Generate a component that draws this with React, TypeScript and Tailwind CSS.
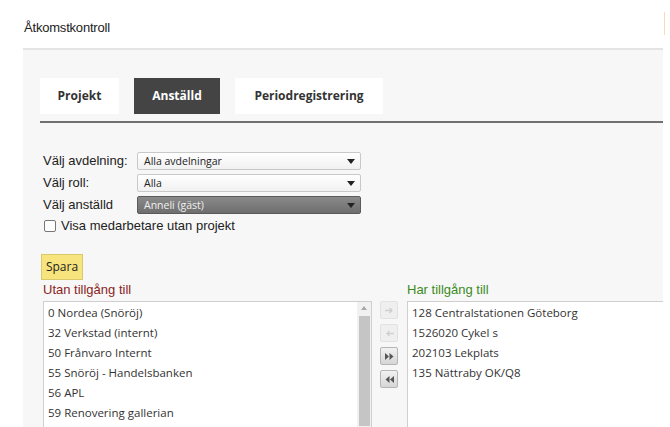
import { useState } from "react";

const withoutAccess = [
  "0 Nordea (Snöröj)",
  "32 Verkstad (internt)",
  "50 Frånvaro Internt",
  "55 Snöröj - Handelsbanken",
  "56 APL",
  "59 Renovering gallerian",
  "61 Servicearbeten",
];

const withAccess = [
  "128 Centralstationen Göteborg",
  "1526020 Cykel s",
  "202103 Lekplats",
  "135 Nättraby OK/Q8",
];

const tabs = [
  { name: "Projekt", width: "w-[79px]" },
  { name: "Anställd", width: "w-[86px]" },
  { name: "Periodregistrering", width: "w-[148px]" },
];

const Caret = () => (
  <svg width="8" height="5" viewBox="0 0 8 5" className="mr-[5px]">
    <path d="M0 0h8L4 5z" fill="#222" />
  </svg>
);

const SelectBox = ({ value, dark }: { value: string; dark?: boolean }) => (
  <div
    className={
      dark
        ? "flex h-[18px] w-[224px] items-center justify-between rounded-[2px] border border-[#5a5a5a] bg-gradient-to-b from-[#8a8a8a] to-[#6e6e6e] text-[#f0f0f0]"
        : "flex h-[18px] w-[224px] items-center justify-between rounded-[2px] border border-[#c9c9c9] bg-gradient-to-b from-white to-[#f1f1f1] text-[#222]"
    }
  >
    <span className="pl-[6px] text-[10.5px] [font-family:'Open_Sans',sans-serif]">{value}</span>
    <Caret />
  </div>
);

const MoveButton = ({ enabled, children }: { enabled?: boolean; children: React.ReactNode }) => (
  <button
    className={
      enabled
        ? "flex h-[18px] w-[18px] items-center justify-center rounded-[2px] border border-[#b5b5b5] bg-gradient-to-b from-[#f2f2f2] to-[#d6d6d6] text-[#555]"
        : "flex h-[18px] w-[18px] items-center justify-center rounded-[2px] border border-[#e2e2e2] bg-[#efefef] text-[#cfcfcf]"
    }
  >
    {children}
  </button>
);

export default function App() {
  const [active, setActive] = useState("Anställd");
  const [showAll, setShowAll] = useState(false);

  return (
    <div className="h-[427px] w-[670px] overflow-hidden bg-white [font-family:'Liberation_Sans',Arial,sans-serif]">
      <div className="relative h-[48px] pl-[24px] pt-[18px] text-[13px] tracking-[-0.2px] text-[#222]">
        Åtkomstkontroll
        <div className="absolute right-[5px] top-[12px] h-[23px] w-px bg-[#f3dcc0]" />
      </div>

      <div className="ml-[23px] h-[379px] w-[640px] border-t-2 border-[#e4e4e4] bg-[#f7f7f7]">
        <div className="pl-[17px] pt-[28px]">
          <div className="flex gap-[15px] border-b-2 border-[#707070] pb-[7px]">
            {tabs.map((t) => (
              <button
                key={t.name}
                onClick={() => setActive(t.name)}
                className={
                  (active === t.name ? "bg-[#444] text-white " : "bg-white text-[#333] ") +
                  t.width +
                  " h-[36px] text-[12px] font-bold [font-family:'Open_Sans',sans-serif]"
                }
              >
                {t.name}
              </button>
            ))}
          </div>
        </div>

        <div className="flex flex-col gap-[4px] pl-[20px] pt-[29px] text-[13px] leading-[18px] text-[#222]">
          <div className="flex items-center">
            <span className="w-[94px]">Välj avdelning:</span>
            <SelectBox value="Alla avdelningar" />
          </div>
          <div className="flex items-center">
            <span className="w-[94px]">Välj roll:</span>
            <SelectBox value="Alla" />
          </div>
          <div className="flex items-center">
            <span className="w-[94px]">Välj anställd</span>
            <SelectBox value="Anneli (gäst)" dark />
          </div>
          <label className="-mt-[1px] flex items-center gap-[5px] pl-[1px]">
            <input
              type="checkbox"
              checked={showAll}
              onChange={(e) => setShowAll(e.target.checked)}
              className="h-[12px] w-[12px] appearance-none rounded-[2px] border border-[#777] bg-white"
            />
            Visa medarbetare utan projekt
          </label>
        </div>

        <div className="pl-[18px] pt-[19px]">
          <button className="h-[26px] w-[42px] border border-[#d9c96a] bg-[#f7e47c] text-[12px] text-[#222] [font-family:'Open_Sans',sans-serif]">
            Spara
          </button>
        </div>

        <div className="flex pl-[20px]">
          <div className="w-[329px]">
            <div className="h-[21px] text-[13px] leading-[20px] text-[#8b1d1d]">Utan tillgång till</div>
            <div className="flex h-[140px] border border-[#cfcfcf] bg-white">
              <ul className="flex-1 pl-[4px] pt-[1px] text-[11.5px] text-[#333] [font-family:'Open_Sans',sans-serif]">
                {withoutAccess.map((p) => (
                  <li key={p} className="h-[20px] leading-[20px]">
                    {p}
                  </li>
                ))}
              </ul>
              <div className="flex w-[14px] flex-col items-center bg-[#f1f1f1] pt-[4px]">
                <svg width="6" height="4" viewBox="0 0 6 4">
                  <path d="M0 4L3 0l3 4z" fill="#a8a8a8" />
                </svg>
                <div className="mt-[6px] h-[110px] w-[11px] bg-[#c5c5c5]" />
              </div>
            </div>
          </div>

          <div className="flex flex-col gap-[5px] pl-[8px] pt-[21px]">
            <MoveButton>
              <svg width="9" height="7" viewBox="0 0 9 7">
                <path d="M0 3.5h7M4.5 1l2.5 2.5L4.5 6" stroke="currentColor" strokeWidth="1.3" fill="none" />
              </svg>
            </MoveButton>
            <MoveButton>
              <svg width="9" height="7" viewBox="0 0 9 7">
                <path d="M9 3.5H2M4.5 1L2 3.5 4.5 6" stroke="currentColor" strokeWidth="1.3" fill="none" />
              </svg>
            </MoveButton>
            <MoveButton enabled>
              <svg width="9" height="7" viewBox="0 0 9 7">
                <path d="M0 0l4 3.5L0 7zM4.5 0l4 3.5-4 3.5z" fill="currentColor" />
              </svg>
            </MoveButton>
            <MoveButton enabled>
              <svg width="9" height="7" viewBox="0 0 9 7">
                <path d="M4.5 0L0.5 3.5l4 3.5zM9 0L5 3.5 9 7z" fill="currentColor" />
              </svg>
            </MoveButton>
          </div>

          <div className="flex-1 pl-[9px]">
            <div className="h-[21px] text-[13px] leading-[20px] text-[#3c8a1f]">Har tillgång till</div>
            <ul className="h-[140px] border border-r-0 border-[#cfcfcf] bg-white pl-[4px] pt-[1px] text-[11.5px] text-[#333] [font-family:'Open_Sans',sans-serif]">
              {withAccess.map((p) => (
                <li key={p} className="h-[20px] leading-[20px]">
                  {p}
                </li>
              ))}
            </ul>
          </div>
        </div>
      </div>
    </div>
  );
}
